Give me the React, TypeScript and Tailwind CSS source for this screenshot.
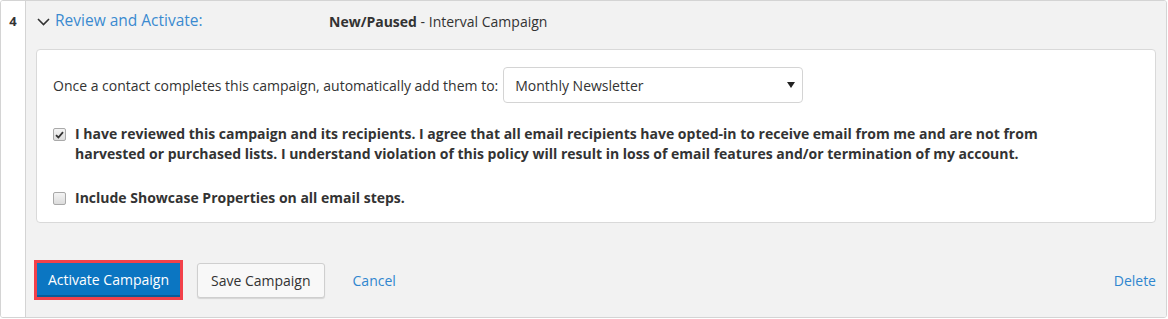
function Check({ checked }: { checked?: boolean }) {
  return (
    <span className="mt-[4px] flex h-[13px] w-[13px] shrink-0 items-center justify-center rounded-[2px] border border-[#a9a9a9] bg-gradient-to-b from-[#f4f4f4] to-[#dcdcdc]">
      {checked && (
        <svg width="9" height="8" viewBox="0 0 9 8">
          <path d="M1 4.2 L3.4 6.5 L8 1.2" fill="none" stroke="#333" strokeWidth="1.8" />
        </svg>
      )}
    </span>
  );
}

export default function App() {
  return (
    <div className="h-[319px] w-[1168px] bg-white text-[14px] text-[#333]" style={{ fontFamily: '"Open Sans", sans-serif' }}>
      <div className="flex h-[318px] w-[1167px] overflow-hidden rounded-[3px] border border-[#d4d4d4]">
        <div className="w-[24px] shrink-0 bg-white pt-[11px] text-center text-[13px] font-bold">4</div>
        <div className="flex flex-1 flex-col border-l border-[#d4d4d4] bg-[#f2f2f2] pl-[10px] pr-[10px]">
          <div className="flex h-[48px] items-start pt-[8px]">
            <div className="flex w-[293px] items-center">
              <svg width="13" height="8" viewBox="0 0 13 8" className="ml-[1px] mt-[2px]">
                <path d="M1 1 L6.5 6.5 L12 1" fill="none" stroke="#333" strokeWidth="1.6" />
              </svg>
              <span className="ml-[5px] text-[15.5px] text-[#3a8ad0]">Review and Activate:</span>
            </div>
            <div className="pt-[2px]">
              <span className="font-bold">New/Paused</span> - Interval Campaign
            </div>
          </div>
          <div className="h-[174px] rounded-[4px] border border-[#d9d9d9] bg-white px-[16px] pt-[17px]">
            <div className="flex items-center">
              <span>Once a contact completes this campaign, automatically add them to:</span>
              <div className="ml-[5px] flex h-[36px] w-[300px] items-center justify-between rounded-[4px] border border-[#d4d4d4] pl-[11px] pr-[7px]">
                <span>Monthly Newsletter</span>
                <svg width="8" height="6" viewBox="0 0 8 6">
                  <path d="M0 0 H8 L4 6 Z" fill="#222" />
                </svg>
              </div>
            </div>
            <div className="mt-[21px] flex gap-[9px] font-bold leading-[20px]">
              <Check checked />
              <span className="w-[975px]">
                I have reviewed this campaign and its recipients. I agree that all email recipients have opted-in to receive email from me and are not from harvested or purchased lists. I understand violation of this policy will result in loss of email features and/or termination of my account.
              </span>
            </div>
            <div className="mt-[24px] flex gap-[9px] font-bold leading-[20px]">
              <Check />
              <span>Include Showcase Properties on all email steps.</span>
            </div>
          </div>
          <div className="mt-[37px] flex items-center">
            <div className="-ml-[2px] border-[3px] border-[#f2414a] bg-white">
              <button className="block h-[34px] border-b-2 border-[#0a5c99] bg-[#0b76c2] px-[11px] text-white">
                Activate Campaign
              </button>
            </div>
            <button className="ml-[14px] h-[35px] rounded-[3px] border border-[#cfcfcf] bg-[#f8f8f8] px-[13px] text-[#333] shadow-[0_1px_1px_rgba(0,0,0,0.12)]">
              Save Campaign
            </button>
            <span className="ml-[28px] text-[#2f86cf]">Cancel</span>
            <span className="ml-auto text-[#2f86cf]">Delete</span>
          </div>
        </div>
      </div>
    </div>
  );
}
